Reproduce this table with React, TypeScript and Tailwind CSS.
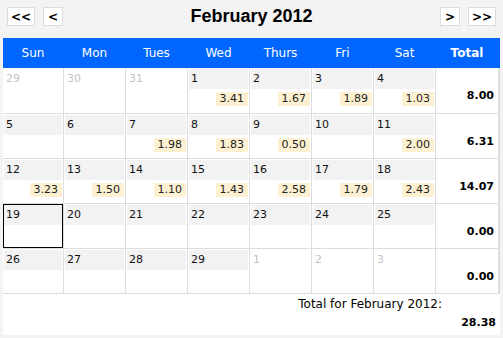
import React from "react";

type Day = { n: number; amt?: string; other?: boolean; today?: boolean };

const weeks: { days: Day[]; total: string }[] = [
  {
    days: [
      { n: 29, other: true },
      { n: 30, other: true },
      { n: 31, other: true },
      { n: 1, amt: "3.41" },
      { n: 2, amt: "1.67" },
      { n: 3, amt: "1.89" },
      { n: 4, amt: "1.03" },
    ],
    total: "8.00",
  },
  {
    days: [
      { n: 5 },
      { n: 6 },
      { n: 7, amt: "1.98" },
      { n: 8, amt: "1.83" },
      { n: 9, amt: "0.50" },
      { n: 10 },
      { n: 11, amt: "2.00" },
    ],
    total: "6.31",
  },
  {
    days: [
      { n: 12, amt: "3.23" },
      { n: 13, amt: "1.50" },
      { n: 14, amt: "1.10" },
      { n: 15, amt: "1.43" },
      { n: 16, amt: "2.58" },
      { n: 17, amt: "1.79" },
      { n: 18, amt: "2.43" },
    ],
    total: "14.07",
  },
  {
    days: [
      { n: 19, today: true },
      { n: 20 },
      { n: 21 },
      { n: 22 },
      { n: 23 },
      { n: 24 },
      { n: 25 },
    ],
    total: "0.00",
  },
  {
    days: [
      { n: 26 },
      { n: 27 },
      { n: 28 },
      { n: 29 },
      { n: 1, other: true },
      { n: 2, other: true },
      { n: 3, other: true },
    ],
    total: "0.00",
  },
];

const heads = ["Sun", "Mon", "Tues", "Wed", "Thurs", "Fri", "Sat"];

const cols = "grid-cols-[60px_61px_61px_61px_61px_61px_61px_62px]";

const NavBtn = ({ label, w }: { label: string; w: string }) => (
  <div
    className={`${w} h-[19px] bg-white border border-[#dcdcdc] flex items-center justify-center text-[12px] font-bold text-black leading-none`}
  >
    {label}
  </div>
);

const DayCell = ({ d }: { d: Day }) => (
  <div
    className={`bg-white flex flex-col ${
      d.today ? "border border-black" : "p-px"
    }`}
  >
    <div
      className={`h-[20px] pl-[2px] leading-[20px] text-[11px] ${
        d.other ? "text-[#c4c4c4]" : "bg-[#f2f2f2] text-[#111]"
      }`}
    >
      {d.n}
    </div>
    {d.amt && (
      <div className="self-end mt-[3px] h-[14px] leading-[14px] px-[4px] bg-[#fdf1d2] text-[11px] text-[#222]">
        {d.amt}
      </div>
    )}
  </div>
);

export default function App() {
  return (
    <div className="w-[503px] h-[338px] bg-[#f3f3f3] px-[3px] font-['DejaVu_Sans',Verdana,sans-serif]">
      <div className="flex px-[4px] pt-[7px] h-[38px] items-start">
        <div className="flex gap-2">
          <NavBtn label="<<" w="w-[28px]" />
          <NavBtn label="<" w="w-[20px]" />
        </div>
        <div className="flex-1 text-center font-['Liberation_Sans',Arial,sans-serif] font-bold text-[18px] leading-[19px] text-black">
          February 2012
        </div>
        <div className="flex gap-2">
          <NavBtn label=">" w="w-[20px]" />
          <NavBtn label=">>" w="w-[28px]" />
        </div>
      </div>

      <div className={`grid ${cols} gap-px bg-[#0066ff] h-[30px] text-white text-[12px]`}>
        {heads.map((h) => (
          <div key={h} className="flex items-center justify-center">
            {h}
          </div>
        ))}
        <div className="flex items-center justify-center font-bold">Total</div>
      </div>

      <div
        className={`grid ${cols} grid-rows-[45px_44px_44px_44px_44px] gap-px bg-[#dddddd] pb-px`}
      >
        {weeks.map((w, i) => (
          <React.Fragment key={i}>
            {w.days.map((d, j) => (
              <DayCell key={j} d={d} />
            ))}
            <div className="bg-white text-right pr-[4px] pt-[21px] text-[11px] leading-[13px] font-bold text-black">
              {w.total}
            </div>
          </React.Fragment>
        ))}
      </div>

      <div className="bg-white h-[41px] pt-[3px] text-black">
        <div className="text-right pr-[58px] text-[12px] leading-[14px]">Total for February 2012:</div>
        <div className="text-right pr-[4px] mt-[5px] font-bold text-[11px] leading-[13px]">28.38</div>
      </div>
    </div>
  );
}
